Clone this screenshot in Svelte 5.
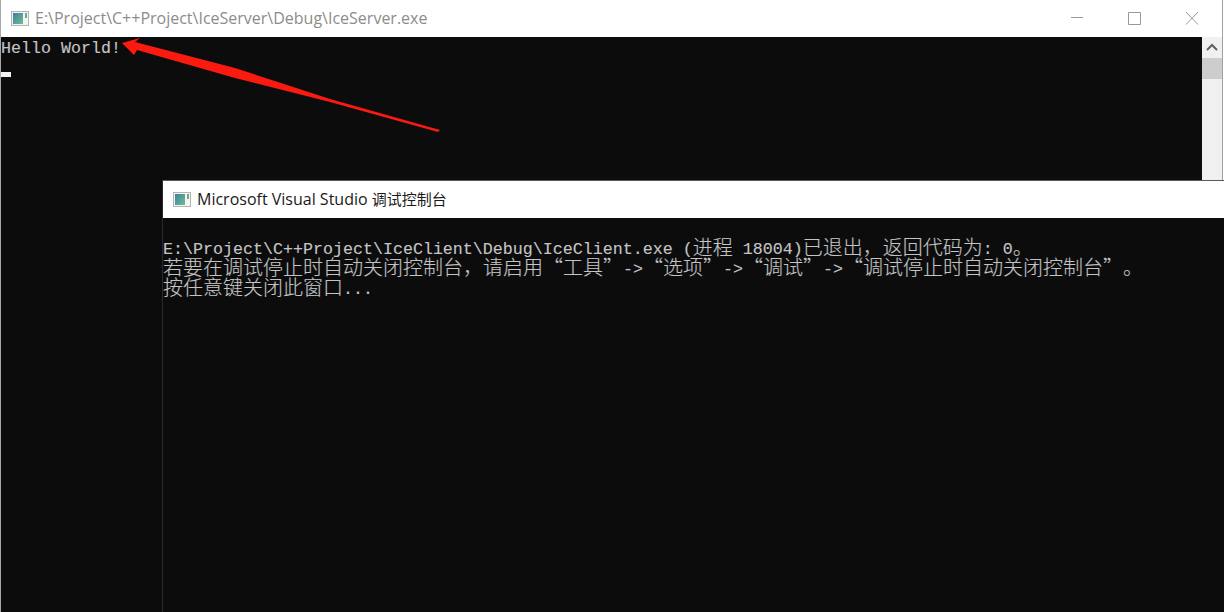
<script lang="ts">
  const backLines = ['Hello World!'];
  const frontLines = [
    '',
    'E:\\Project\\C++Project\\IceClient\\Debug\\IceClient.exe (进程 18004)已退出，返回代码为: 0。',
    '若要在调试停止时自动关闭控制台，请启用“工具”->“选项”->“调试”->“调试停止时自动关闭控制台”。',
    '按任意键关闭此窗口...'
  ];

  // split a console line into latin and CJK runs, they have different cell widths
  const runs = (line: string) => line.split(/([^\x00-\x7f]+)/).filter(Boolean);
  const isWide = (run: string) => /[^\x00-\x7f]/.test(run);
</script>

{#snippet consoleIcon()}
  <svg class="app-icon" width="18" height="15" viewBox="0 0 18 15">
    <rect x="0.5" y="0.5" width="17" height="14" fill="#f4f4f4" stroke="#b4b4b4" />
    <rect x="2" y="2" width="10" height="11" fill="url(#panel)" />
    <rect x="14" y="2" width="2" height="5" fill="#6fa98c" />
    <defs>
      <linearGradient id="panel" x1="0" y1="0" x2="1" y2="1">
        <stop offset="0" stop-color="#3f7f9f" />
        <stop offset="1" stop-color="#6fbf8f" />
      </linearGradient>
    </defs>
  </svg>
{/snippet}

{#snippet consoleLine(line: string)}
  <div class="line">
    {#each runs(line) as run}
      {#if isWide(run)}<span class="wide">{run}</span>{:else}<span>{run}</span>{/if}
    {/each}
  </div>
{/snippet}

<div class="desktop" lang="zh-CN">
  <section class="window back">
    <header class="titlebar">
      {@render consoleIcon()}
      <span class="title muted">E:\Project\C++Project\IceServer\Debug\IceServer.exe</span>
      <div class="controls">
        <button class="control" aria-label="minimize">
          <svg width="14" height="14" viewBox="0 0 14 14"><path d="M2 5.5h12" stroke="#999" fill="none" /></svg>
        </button>
        <button class="control" aria-label="maximize">
          <svg width="14" height="14" viewBox="0 0 14 14"><path d="M1.5 0.5h12v12h-12z" stroke="#999" fill="none" /></svg>
        </button>
        <button class="control" aria-label="close">
          <svg width="14" height="14" viewBox="0 0 14 14"><path d="M1 0l12 12.5M13 0L1 12.5" stroke="#999" fill="none" /></svg>
        </button>
      </div>
    </header>
    <div class="body">
      <div class="console">
        {#each backLines as line}
          {@render consoleLine(line)}
        {/each}
        <div class="cursor"></div>
      </div>
      <div class="scrollbar">
        <svg width="20" height="20" viewBox="0 0 20 20"><path d="M5 13l5-5 5 5" stroke="#606060" stroke-width="2" fill="none" /></svg>
        <div class="thumb"></div>
      </div>
    </div>
  </section>

  <svg class="arrow" width="450" height="140" viewBox="0 0 450 140">
    <path d="M122 43L140 38L135 42L235 68L330 99L440 130L438 132L330 102L235 78L137 50L134 55Z" fill="#fb1a10" />
  </svg>

  <section class="window front">
    <header class="titlebar">
      {@render consoleIcon()}
      <span class="title">Microsoft Visual Studio <span class="title-cjk">调试控制台</span></span>
    </header>
    <div class="console">
      {#each frontLines as line}
        {@render consoleLine(line)}
      {/each}
    </div>
  </section>
</div>

<style>
  :global(body) {
    background: #0c0c0c;
  }

  .desktop {
    position: relative;
    width: 1224px;
    height: 612px;
    overflow: hidden;
    background: #0c0c0c;
    text-spacing-trim: space-all;
  }

  .window {
    display: flex;
    flex-direction: column;
    background: #0c0c0c;
  }

  .back {
    height: 100%;
    border-left: 1px solid #a8a8a8;
    border-right: 2px solid transparent;
    box-sizing: border-box;
    position: relative;
  }

  .back::after {
    content: '';
    position: absolute;
    top: 0;
    right: -2px;
    bottom: 0;
    width: 2px;
    background: linear-gradient(to right, #a0a0a0 50%, #fff 50%);
  }

  .front {
    position: absolute;
    left: 162px;
    top: 180px;
    right: 0;
    bottom: 0;
    border-left: 1px solid #2a2a2a;
    border-top: 1px solid #5a5a5a;
  }

  .titlebar {
    flex: none;
    height: 37px;
    padding-left: 10px;
    padding-bottom: 1px;
    box-sizing: border-box;
    display: flex;
    align-items: center;
    background: #fff;
  }

  .app-icon {
    flex: none;
    margin-right: 6px;
  }

  .title {
    font-family: 'Open Sans', 'Noto Sans CJK SC', sans-serif;
    font-size: 16px;
    color: #1a1a1a;
    white-space: pre;
  }

  .title-cjk {
    font-size: 15px;
  }

  .muted {
    color: #8c8c8c;
  }

  .controls {
    margin-left: auto;
    margin-right: 1px;
    display: flex;
    align-self: flex-start;
  }

  .control {
    width: 58px;
    height: 37px;
    padding: 12px 0 0;
    border: 0;
    background: none;
    display: flex;
    align-items: flex-start;
    justify-content: center;
  }

  .body {
    flex: 1;
    display: flex;
    min-height: 0;
  }

  .body .console {
    flex: 1;
  }

  .scrollbar {
    flex: none;
    width: 20px;
    background: #f0f0f0;
  }

  .scrollbar svg {
    display: block;
    margin-bottom: 1px;
  }

  .thumb {
    height: 21px;
    background: #cdcdcd;
  }

  .console {
    font-family: 'Liberation Mono', monospace;
    font-size: 16.667px;
    line-height: 24px;
    color: #c4c4c4;
    text-shadow: 0.4px 0 rgba(230, 150, 70, 0.18), -0.4px 0 rgba(90, 160, 240, 0.22);
  }

  .line {
    height: 20px;
    white-space: pre;
  }

  .wide {
    font-family: 'Noto Sans CJK SC', sans-serif;
    font-size: 20px;
    font-weight: 300;
    line-height: 0;
    position: relative;
    top: 1px;
  }

  .cursor {
    width: 10px;
    height: 5px;
    margin-top: 15px;
    background: #f2f2f2;
  }

  .arrow {
    position: absolute;
    left: 0;
    top: 0;
  }
</style>
